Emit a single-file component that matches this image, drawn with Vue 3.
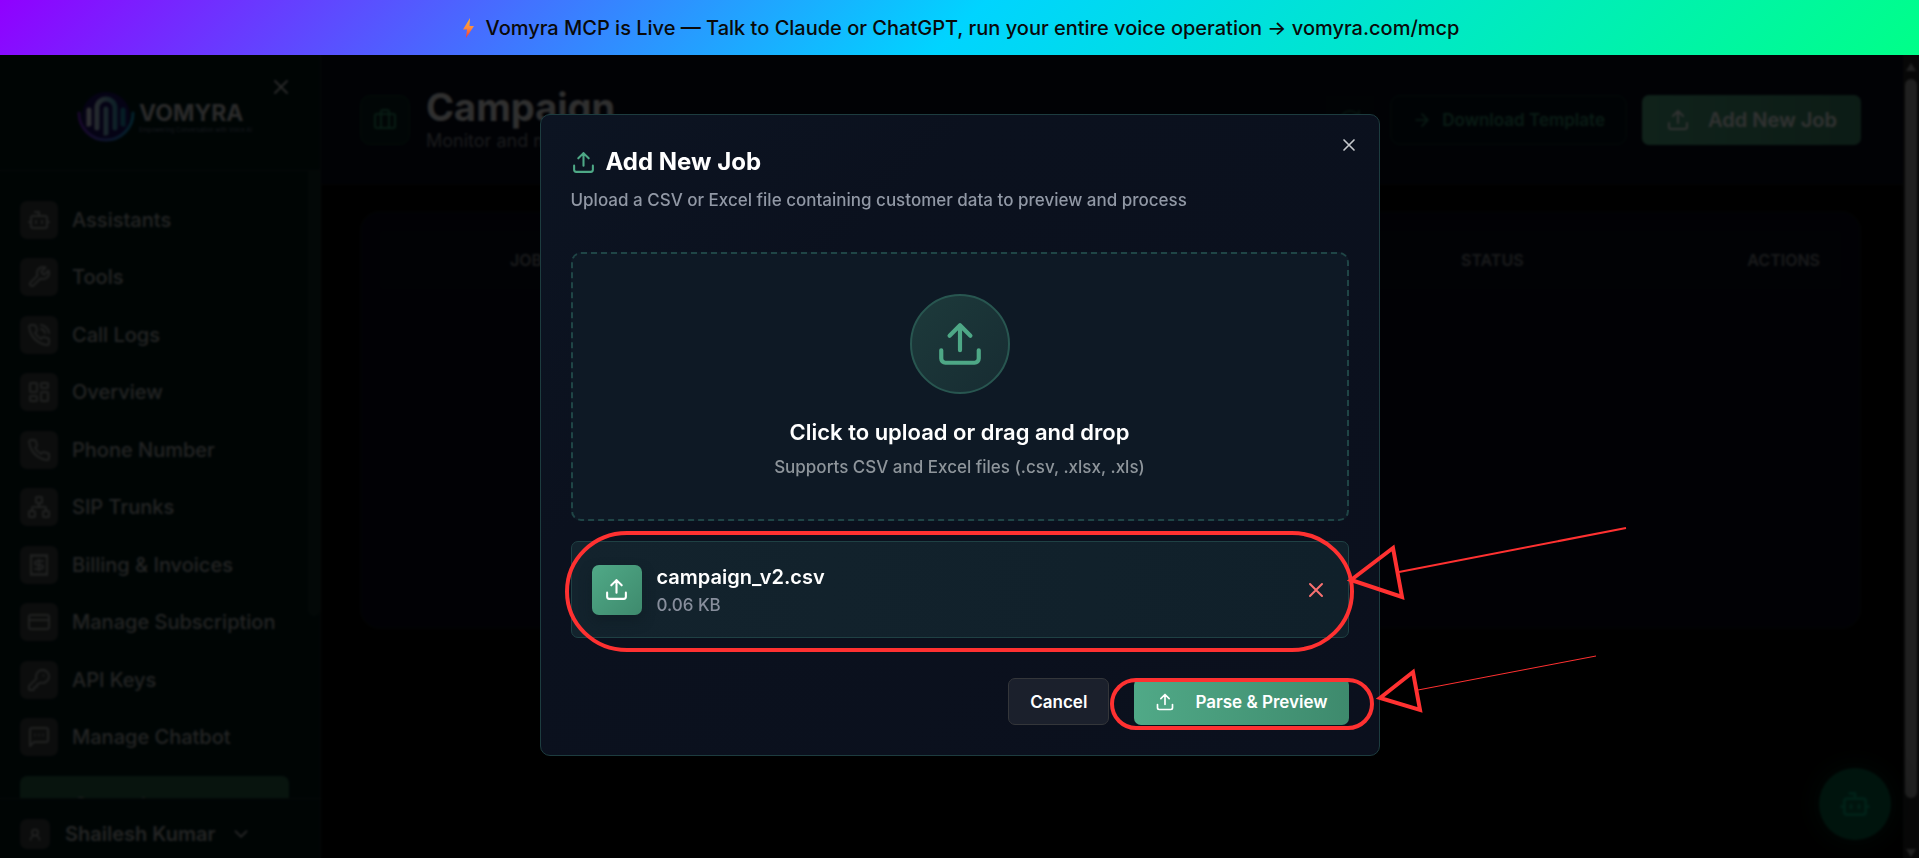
<template>
  <div class="app">
    <a class="banner" href="#mcp">
      <svg class="bolt" viewBox="0 0 16 24" aria-hidden="true">
        <defs>
          <linearGradient id="bolt-fill" x1="0" y1="0" x2="0" y2="1">
            <stop offset="0" stop-color="#ffb02e" />
            <stop offset="0.5" stop-color="#ff8a3c" />
            <stop offset="1" stop-color="#f8312f" />
          </linearGradient>
        </defs>
        <path d="M10 2 3 13.500h4L6 22l8-12h-4.500z" fill="url(#bolt-fill)" />
      </svg>
      <span>Vomyra MCP is Live — Talk to Claude or ChatGPT, run your entire voice operation → vomyra.com/mcp</span>
    </a>

    <div class="stage">
      <div class="shell">
        <aside class="sidebar">
          <div class="brand">
            <svg class="brand-mark" viewBox="0 0 58 52" aria-hidden="true">
              <defs>
                <linearGradient id="mark-ring" x1="0" y1="0" x2="1" y2="0">
                  <stop offset="0" stop-color="#7a22d8" />
                  <stop offset="1" stop-color="#12a5d8" />
                </linearGradient>
                <linearGradient id="mark-bars" x1="0" y1="0" x2="1" y2="0">
                  <stop offset="0" stop-color="#e4e4f4" />
                  <stop offset="1" stop-color="#1a8fb4" />
                </linearGradient>
              </defs>
              <circle cx="29" cy="25" r="24" fill="#1c1068" />
              <path d="M2 22a27 27 0 0 0 54 0" fill="none" stroke="url(#mark-ring)" stroke-width="3" stroke-linecap="round" />
              <g fill="none" stroke="url(#mark-bars)" stroke-width="5" stroke-linecap="round">
                <path d="M12 19v14l.1 0M20 37V17a9 9 0 0 1 18 0v20M29 18v24l.1 0M46 19v14l-.1 0" />
              </g>
            </svg>
            <div class="brand-text">
              <span class="brand-name">VOMYRA</span>
              <span class="brand-tag">Empowering Conversation with Voice AI</span>
            </div>
            <button class="icon-button sidebar-close" type="button" aria-label="Close sidebar">
              <svg class="icon" viewBox="0 0 24 24"><path :d="icons.close" /></svg>
            </button>
          </div>

          <nav class="nav">
            <ul class="nav-list">
              <li v-for="item in navItems" :key="item.label">
                <a class="nav-link" href="#">
                  <span class="nav-icon"><svg class="icon" viewBox="0 0 24 24"><path :d="item.icon" /></svg></span>
                  {{ item.label }}
                </a>
              </li>
            </ul>
            <a class="nav-link nav-active" href="#" aria-current="page">Campaign</a>
            <div class="nav-scroll"></div>
          </nav>

          <button class="user" type="button">
            <span class="user-icon"><svg class="icon" viewBox="0 0 24 24"><path :d="icons.user" /></svg></span>
            Shailesh Kumar
            <svg class="icon user-chevron" viewBox="0 0 24 24"><path d="m6 9 6 6 6-6" /></svg>
          </button>
        </aside>

        <main class="main">
          <header class="page-header">
            <span class="page-icon"><svg class="icon" viewBox="0 0 24 24"><path :d="icons.briefcase" /></svg></span>
            <div class="page-heading">
              <h1>Campaign</h1>
              <p>Monitor and manage campaigns</p>
            </div>
            <div class="page-actions">
              <button class="refresh" type="button" aria-label="Refresh">
                <svg class="icon" viewBox="0 0 24 24"><path :d="icons.refresh" /></svg>
              </button>
              <button class="template-button" type="button">
                <svg class="icon" viewBox="0 0 24 24"><path d="M5 12h14M12 5l7 7-7 7" /></svg>
                Download Template
              </button>
              <button class="job-button" type="button">
                <svg class="icon" viewBox="0 0 24 24"><path :d="icons.upload" /></svg>
                Add New Job
              </button>
            </div>
          </header>

          <section class="jobs">
            <table>
              <thead>
                <tr>
                  <th class="col-job">JOB NAME</th>
                  <th class="col-status">STATUS</th>
                  <th class="col-actions">ACTIONS</th>
                </tr>
              </thead>
            </table>
          </section>

          <button class="fab" type="button" aria-label="Open assistant">
            <svg class="icon" viewBox="0 0 24 24"><path :d="icons.bot" /></svg>
          </button>
        </main>

        <div class="scrollbar">
          <svg class="scroll-arrow" viewBox="0 0 12 10"><path d="M6 1 11 9H1z" /></svg>
          <div class="scroll-thumb"></div>
          <svg class="scroll-arrow" viewBox="0 0 12 10"><path d="M6 9 1 1h10z" /></svg>
        </div>
      </div>

      <div class="overlay">
        <div class="modal" role="dialog" aria-labelledby="modal-title">
          <header class="modal-header">
            <h2 id="modal-title">
              <svg class="icon" viewBox="0 0 24 24"><path :d="icons.upload" /></svg>
              Add New Job
            </h2>
            <p>Upload a CSV or Excel file containing customer data to preview and process</p>
            <button class="icon-button modal-close" type="button" aria-label="Close">
              <svg class="icon" viewBox="0 0 24 24"><path :d="icons.close" /></svg>
            </button>
          </header>

          <label class="dropzone">
            <input class="file-input" type="file" accept=".csv,.xlsx,.xls" />
            <span class="drop-icon"><svg class="icon" viewBox="0 0 24 24"><path :d="icons.upload" /></svg></span>
            <span class="drop-title">Click to upload or drag and drop</span>
            <span class="drop-hint">Supports CSV and Excel files (.csv, .xlsx, .xls)</span>
          </label>

          <div class="file">
            <span class="file-icon"><svg class="icon" viewBox="0 0 24 24"><path :d="icons.upload" /></svg></span>
            <div class="file-info">
              <p class="file-name">campaign_v2.csv</p>
              <p class="file-size">0.06 KB</p>
            </div>
            <button class="icon-button file-remove" type="button" aria-label="Remove file">
              <svg class="icon" viewBox="0 0 24 24"><path :d="icons.close" /></svg>
            </button>
          </div>

          <footer class="modal-footer">
            <button class="cancel" type="button">Cancel</button>
            <button class="parse" type="button">
              <svg class="icon" viewBox="0 0 24 24"><path :d="icons.upload" /></svg>
              Parse &amp; Preview
            </button>
          </footer>

          <!-- callouts around the chosen file and the next step -->
          <svg class="callouts" viewBox="0 0 838 640" aria-hidden="true">
            <rect x="26" y="418" width="785" height="117" rx="60" />
            <path d="M810 465 852 433l9 49z" />
            <path class="tail" d="M858 457 1085 413" />
            <rect x="571" y="565" width="260" height="48" rx="24" />
            <path d="M839 583 872 557l7 38z" />
            <path class="tail thin" d="M877 575 1055 541" />
          </svg>
        </div>
      </div>
    </div>
  </div>
</template>

<script setup>
const icons = {
  close: 'M18 6 6 18M6 6l12 12',
  upload: 'M21 15v4a2 2 0 0 1-2 2H5a2 2 0 0 1-2-2v-4M17 8l-5-5-5 5M12 3v12',
  bot: 'M12 8V4H8M6 8h12a2 2 0 0 1 2 2v8a2 2 0 0 1-2 2H6a2 2 0 0 1-2-2v-8a2 2 0 0 1 2-2zM2 14h2M20 14h2M15 13v2M9 13v2',
  user: 'M18 20a6 6 0 0 0-12 0M12 14a4 4 0 1 0 0-8 4 4 0 0 0 0 8z',
  briefcase: 'M16 20V4a2 2 0 0 0-2-2h-4a2 2 0 0 0-2 2v16M4 6h16a2 2 0 0 1 2 2v10a2 2 0 0 1-2 2H4a2 2 0 0 1-2-2V8a2 2 0 0 1 2-2z',
  refresh: 'M3 12a9 9 0 0 1 9-9 9.750 9.750 0 0 1 6.740 2.740L21 8M21 3v5h-5M21 12a9 9 0 0 1-9 9 9.750 9.750 0 0 1-6.740-2.740L3 16M8 16H3v5',
}

const phone = 'M22 16.920v3a2 2 0 0 1-2.180 2 19.790 19.790 0 0 1-8.630-3.070 19.500 19.500 0 0 1-6-6 19.790 19.790 0 0 1-3.070-8.670A2 2 0 0 1 4.110 2h3a2 2 0 0 1 2 1.720 12.840 12.840 0 0 0 .7 2.810 2 2 0 0 1-.45 2.110L8.090 9.910a16 16 0 0 0 6 6l1.270-1.270a2 2 0 0 1 2.110-.45 12.840 12.840 0 0 0 2.810.7A2 2 0 0 1 22 16.920z'

const navItems = [
  { label: 'Assistants', icon: icons.bot },
  { label: 'Tools', icon: 'M14.700 6.300a1 1 0 0 0 0 1.400l1.600 1.600a1 1 0 0 0 1.400 0l3.770-3.770a6 6 0 0 1-7.940 7.940l-6.910 6.910a2.120 2.120 0 0 1-3-3l6.910-6.910a6 6 0 0 1 7.940-7.940l-3.760 3.760z' },
  { label: 'Call Logs', icon: phone + 'M14 2a9 9 0 0 1 8 8M14 6a5 5 0 0 1 4 4' },
  { label: 'Overview', icon: 'M4 3h5a1 1 0 0 1 1 1v7a1 1 0 0 1-1 1H4a1 1 0 0 1-1-1V4a1 1 0 0 1 1-1zM15 3h5a1 1 0 0 1 1 1v3a1 1 0 0 1-1 1h-5a1 1 0 0 1-1-1V4a1 1 0 0 1 1-1zM15 12h5a1 1 0 0 1 1 1v7a1 1 0 0 1-1 1h-5a1 1 0 0 1-1-1v-7a1 1 0 0 1 1-1zM4 16h5a1 1 0 0 1 1 1v3a1 1 0 0 1-1 1H4a1 1 0 0 1-1-1v-3a1 1 0 0 1 1-1z' },
  { label: 'Phone Number', icon: phone },
  { label: 'SIP Trunks', icon: 'M10 2h4a1 1 0 0 1 1 1v4a1 1 0 0 1-1 1h-4a1 1 0 0 1-1-1V3a1 1 0 0 1 1-1zM3 16h4a1 1 0 0 1 1 1v4a1 1 0 0 1-1 1H3a1 1 0 0 1-1-1v-4a1 1 0 0 1 1-1zM17 16h4a1 1 0 0 1 1 1v4a1 1 0 0 1-1 1h-4a1 1 0 0 1-1-1v-4a1 1 0 0 1 1-1zM5 16v-3a1 1 0 0 1 1-1h12a1 1 0 0 1 1 1v3M12 12V8' },
  { label: 'Billing & Invoices', icon: 'M4 2v20l2-1 2 1 2-1 2 1 2-1 2 1 2-1 2 1V2l-2 1-2-1-2 1-2-1-2 1-2-1-2 1zM16 8h-6a2 2 0 1 0 0 4h4a2 2 0 1 1 0 4H8M12 17.500v-11' },
  { label: 'Manage Subscription', icon: 'M4 5h16a2 2 0 0 1 2 2v10a2 2 0 0 1-2 2H4a2 2 0 0 1-2-2V7a2 2 0 0 1 2-2zM2 10h20' },
  { label: 'API Keys', icon: 'M2.590 17.410A2 2 0 0 0 2 18.830V21a1 1 0 0 0 1 1h3a1 1 0 0 0 1-1v-1a1 1 0 0 1 1-1h1a1 1 0 0 0 1-1v-1a1 1 0 0 1 1-1h.17a2 2 0 0 0 1.410-.59l.81-.81a6.500 6.500 0 1 0-4-4zM16.500 7.500h.01' },
  { label: 'Manage Chatbot', icon: 'M21 15a2 2 0 0 1-2 2H7l-4 4V5a2 2 0 0 1 2-2h14a2 2 0 0 1 2 2zM8 10h.01M12 10h.01M16 10h.01' },
]
</script>

<style>
body { margin: 0; background: #000; }
</style>

<style scoped>
.app {
  height: 100vh;
  display: flex;
  flex-direction: column;
  font-family: Inter, "Liberation Sans", sans-serif;
  overflow: hidden;
}
.app * { box-sizing: border-box; }
button { font-family: inherit; border: 0; padding: 0; background: none; display: inline-flex; align-items: center; cursor: pointer; }
a { text-decoration: none; }
h1, h2, p, ul { margin: 0; padding: 0; }
.icon { width: 24px; height: 24px; flex: none; fill: none; stroke: currentColor; stroke-width: 2; stroke-linecap: round; stroke-linejoin: round; }

.banner {
  flex: none;
  height: 55px;
  display: flex;
  align-items: center;
  justify-content: center;
  gap: 10px;
  background: linear-gradient(135deg, #9000ff 0%, #00d4ff 50%, #00ff88 100%);
  color: #0a0a0a;
  font-size: 20px;
  font-weight: 500;
}
.bolt { width: 16px; height: 24px; }

.stage { position: relative; flex: 1; min-height: 0; }
.shell { height: 100%; display: flex; background: #020202; }

.sidebar { width: 321px; flex: none; display: flex; flex-direction: column; background: #001a18; border-right: 1px solid #1e2c2a; }
.brand { position: relative; flex: none; height: 116px; padding: 8px 0 0 77px; display: flex; align-items: center; gap: 4px; border-bottom: 1px solid #1e2c2a; }
.brand-mark { width: 58px; height: 52px; }
.brand-text { display: flex; flex-direction: column; color: #d0d0d0; }
.brand-name { font-size: 23px; line-height: 26px; font-weight: 700; }
.brand-tag { font-size: 6px; line-height: 8px; color: #707a90; white-space: nowrap; }
.sidebar-close { position: absolute; top: 20px; right: 27px; color: #c8c8c8; }

.nav { position: relative; flex: 1; min-height: 0; overflow: hidden; padding: 30px 31px 0 20px; }
.nav-list { list-style: none; display: flex; flex-direction: column; gap: 19px; }
.nav-list li:nth-child(even) { height: 39px; }
.nav-link { display: flex; align-items: center; gap: 14px; height: 38px; color: #b0b3b2; font-size: 20px; font-weight: 500; white-space: nowrap; }
.nav-icon { width: 38px; height: 38px; border-radius: 7px; background: #3d4241; display: grid; place-items: center; }
.nav-icon .icon { color: #a0a5a4; }
.nav-active { height: 58px; margin-top: 19px; padding-left: 53px; border-radius: 7px; background: #286447; }
.nav-scroll { position: absolute; top: 0; right: 0; width: 12px; height: 445px; border-radius: 0 0 6px 6px; background: #112b25; }

.user { flex: none; height: 60px; padding: 10px 20px 0; gap: 15px; border-top: 1px solid #1e2c2a; color: #b0b3b2; font-size: 20px; font-weight: 600; }
.user-icon { width: 30px; height: 30px; border-radius: 7px; background: #3d4241; display: grid; place-items: center; }
.user-icon .icon { width: 18px; height: 18px; }
.user-chevron { width: 22px; height: 22px; }

.main { position: relative; flex: 1; min-width: 0; display: flex; flex-direction: column; }
.page-header { display: flex; align-items: center; gap: 16px; height: 130px; padding: 0 42px 0 39px; background: #050a1a; border-bottom: 1px solid #181d18; }
.page-icon { width: 50px; height: 50px; border-radius: 10px; border: 1px solid #12402f; background: #07211e; color: #2a8a64; display: grid; place-items: center; }
.page-heading { flex: 1; color: #ececec; }
.page-heading h1 { font-size: 38px; line-height: 42px; font-weight: 700; }
.page-heading p { font-size: 18px; line-height: 26px; color: #82878f; }
.page-actions { display: flex; align-items: center; gap: 15px; }
.refresh { width: 50px; height: 50px; justify-content: center; background: #050f1a; color: #1d5a44; }
.template-button { height: 50px; padding: 0 21px; gap: 10px; border: 1px solid #163a30; border-radius: 10px; background: #03111b; color: #2f8767; font-size: 17px; font-weight: 600; }
.template-button .icon { width: 20px; height: 20px; }
.job-button { height: 50px; padding: 0 24px; gap: 18px; border-radius: 7px; background: linear-gradient(90deg, #50aa85, #3d8a6c); color: #f4f8f6; font-size: 20px; font-weight: 600; }

.jobs { margin: 26px 42px 0 39px; height: 418px; padding: 20px; border: 1px solid #151c19; border-radius: 20px; background: #05081a; }
.jobs table { width: 100%; border-collapse: collapse; table-layout: fixed; background: #050d1c; }
.jobs th { height: 56px; padding: 0 20px; text-align: left; font-size: 16px; font-weight: 600; color: #81848a; }
.jobs .col-job { width: 1080px; padding-left: 129px; }
.jobs .col-status { text-align: left; padding-left: 0; }
.jobs .col-actions { text-align: right; }

.fab { position: absolute; right: 12px; bottom: 18px; width: 72px; height: 72px; justify-content: center; border-radius: 50%; background: #006544; color: #00a878; box-shadow: 0 0 30px #00301f; }
.fab .icon { width: 32px; height: 32px; }

.scrollbar { flex: none; width: 16px; display: flex; flex-direction: column; align-items: center; background: #262626; }
.scroll-arrow { width: 12px; height: 10px; margin: 7px 0; fill: #9f9f9f; }
.scroll-thumb { width: 12px; height: 719px; border-radius: 6px; background: #9f9f9f; }
.scroll-thumb + .scroll-arrow { margin: auto 0 0; }

.overlay { position: absolute; inset: 0; padding-top: 59px; display: flex; justify-content: center; align-items: flex-start; background: rgba(0, 0, 0, 0.8); backdrop-filter: blur(1px); }

.modal { position: relative; width: 840px; padding: 30px; border: 1px solid #1d3c3f; border-radius: 10px; background: linear-gradient(135deg, #0c1422, #0b111e 30%, #0b101d); color: #fff; }
.modal-header { display: flex; flex-direction: column; gap: 9px; }
.modal-header h2 { display: flex; align-items: center; gap: 10px; font-size: 24px; line-height: 34px; font-weight: 700; }
.modal-header h2 .icon { width: 25px; height: 25px; color: #4ea886; }
.modal-header p { font-size: 17px; line-height: 24px; font-weight: 500; color: #9198a5; }
.modal-close { position: absolute; top: 20px; right: 20px; color: #c6c8cc; }
.modal-close .icon { width: 20px; height: 20px; }

.dropzone { margin-top: 40px; height: 269px; display: flex; flex-direction: column; align-items: center; padding-top: 40px; border: 2px dashed #1f4546; border-radius: 10px; background: #0e1925; cursor: pointer; }
.file-input { position: absolute; width: 1px; height: 1px; opacity: 0; }
.drop-icon { width: 100px; height: 100px; border: 2px solid #285650; border-radius: 50%; background: linear-gradient(135deg, #1d3a3b, #172c32); color: #4ea886; display: grid; place-items: center; }
.drop-icon .icon { width: 50px; height: 50px; }
.drop-title { margin-top: 22px; font-size: 22px; line-height: 32px; font-weight: 600; }
.drop-hint { margin-top: 6px; font-size: 17px; line-height: 26px; font-weight: 500; color: #8e959b; }

.file { margin-top: 20px; display: flex; align-items: center; gap: 15px; height: 97px; padding: 0 20px; border: 1px solid #1f4144; border-radius: 7px; background: linear-gradient(90deg, #13232d, #10202a); }
.file-icon { width: 50px; height: 50px; border-radius: 7px; background: linear-gradient(135deg, #50a987, #3e8a6d); display: grid; place-items: center; box-shadow: 0 6px 12px rgba(14, 25, 32, 0.5); }
.file-icon .icon { width: 25px; height: 25px; }
.file-info { flex: 1; }
.file-name { font-size: 20px; line-height: 30px; font-weight: 600; }
.file-size { font-size: 17px; line-height: 26px; font-weight: 500; color: #878e9c; }
.file-remove { color: #f87171; }

.modal-footer { margin-top: 40px; display: flex; justify-content: flex-end; gap: 25px; }
.modal-footer button { height: 47px; padding: 0 21px; border-radius: 7px; color: #fff; font-size: 17px; font-weight: 600; }
.modal-footer .cancel { border: 1px solid #34363a; background: #1b202c; }
.modal-footer .parse { gap: 20px; background: linear-gradient(90deg, #50a987, #3e8a6d); }
.parse .icon { width: 20px; height: 20px; }

.callouts { position: absolute; top: 0; left: 0; width: 838px; height: 640px; overflow: visible; fill: none; stroke: #ff3131; stroke-width: 4; pointer-events: none; }
.callouts .tail { stroke-width: 2; }
.callouts .thin { stroke-width: 1; }
</style>
